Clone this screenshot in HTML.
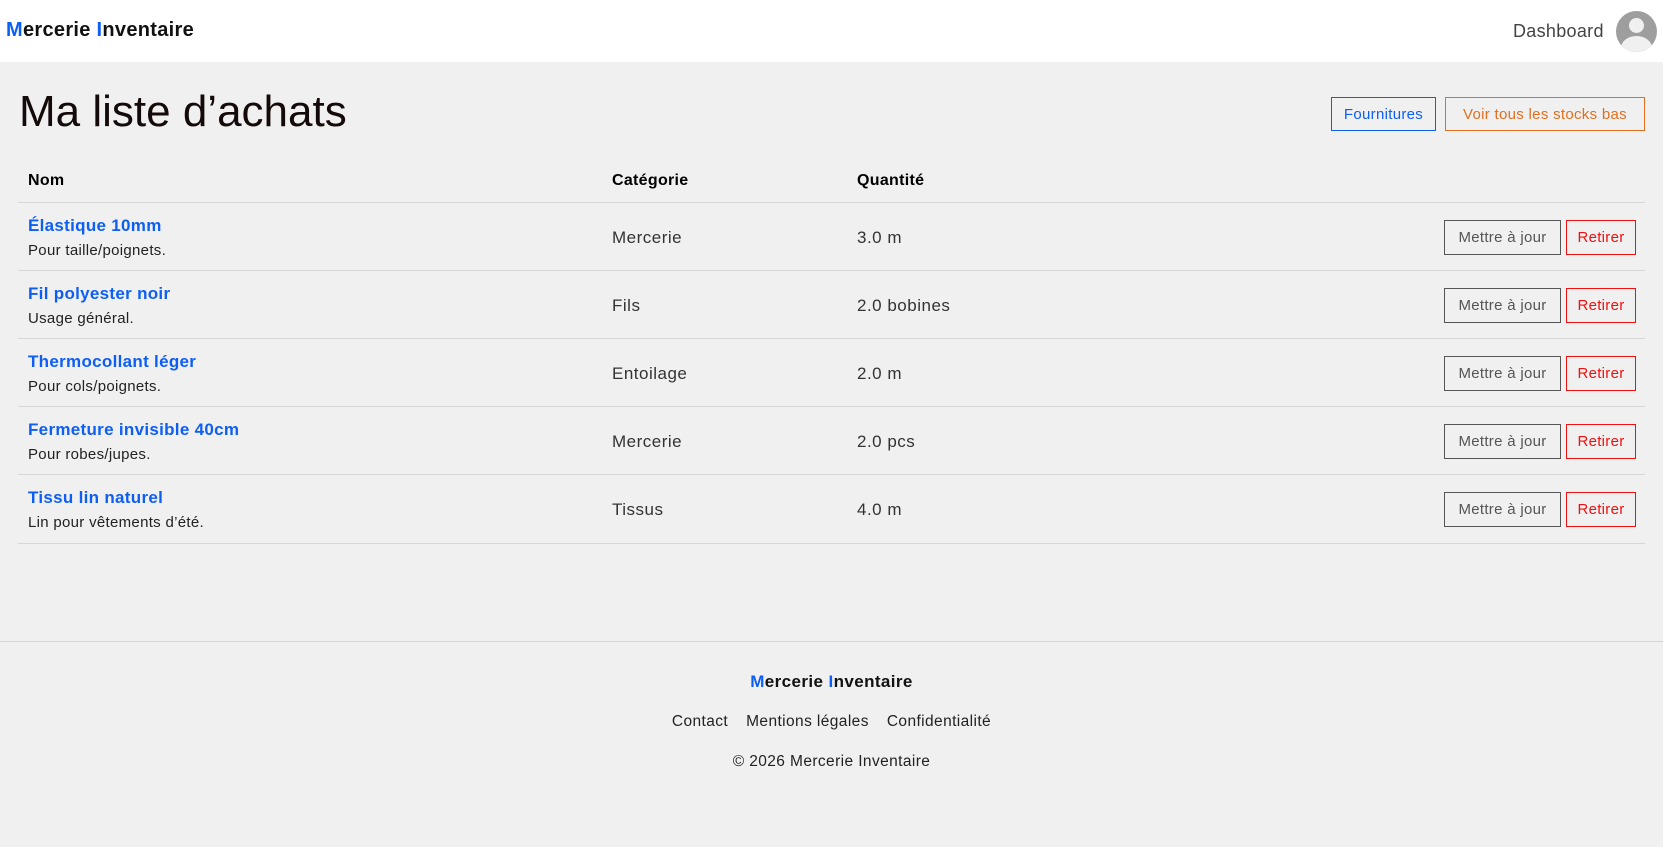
<!DOCTYPE html>
<html><head><meta charset="utf-8"><style>
*{box-sizing:border-box;margin:0;padding:0}
body{width:1663px;height:847px;background:#f0f0f0;font-family:"Liberation Sans",sans-serif;color:#333;position:relative;overflow:hidden}
.hdr{position:absolute;left:0;top:0;width:1663px;height:62px;background:#fff}
.logo{position:absolute;left:6px;top:19px;font-weight:bold;font-size:20px;color:#111;letter-spacing:0.3px}
.logo b{color:#0d5ef5}
.dash{position:absolute;left:1513px;top:21px;font-size:18px;color:#444;letter-spacing:0.3px}
.av{position:absolute;left:1616px;top:11px;width:41px;height:41px;border-radius:50%;background:#9e9e9e;overflow:hidden}
h1{position:absolute;left:19px;top:87px;font-weight:normal;font-size:44px;color:#150a0a}
.btn{position:absolute;border:1px solid;font-size:15px;display:flex;align-items:center;justify-content:center;background:transparent;letter-spacing:0.3px}
.row{position:absolute;left:18px;width:1627px;border-bottom:1px solid #d6d6d6}
.th{position:absolute;font-weight:bold;font-size:16px;color:#000;top:172px;letter-spacing:0.3px}
.nm{position:absolute;left:10px;font-weight:bold;color:#0d5ef5;font-size:17px;letter-spacing:0.3px}
.ds{position:absolute;left:10px;font-size:15px;color:#222;letter-spacing:0.3px}
.c{position:absolute;font-size:17px;color:#333;letter-spacing:0.5px}
.foot{position:absolute;left:0;top:641px;width:1663px;border-top:1px solid #d6d6d6;text-align:center;letter-spacing:0.4px}
</style></head><body>
<div class="hdr">
<div class="logo"><b>M</b>ercerie <b>I</b>nventaire</div>
<div class="dash">Dashboard</div>
<div class="av"><div style="position:absolute;left:13px;top:7px;width:15px;height:15px;border-radius:50%;background:#f0f0f0"></div><div style="position:absolute;left:5px;top:25px;width:31px;height:24px;border-radius:50%;background:#f0f0f0"></div></div>
</div>
<h1>Ma liste d’achats</h1>
<div class="btn" style="left:1331px;top:97px;width:105px;height:34px;color:#0d5ef5;border-color:#0d5ef5">Fournitures</div>
<div class="btn" style="left:1445px;top:97px;width:200px;height:34px;color:#e07020;border-color:#e07020">Voir tous les stocks bas</div>
<div class="th" style="left:28px">Nom</div>
<div class="th" style="left:612px">Catégorie</div>
<div class="th" style="left:857px">Quantité</div>
<div class="row" style="top:202px;height:0"></div>

<div class="row" style="top:203px;height:68px">
<div class="nm" style="top:13px">Élastique 10mm</div><div class="ds" style="top:39px">Pour taille/poignets.</div>
<div class="c" style="left:594px;top:25px">Mercerie</div><div class="c" style="left:839px;top:25px">3.0 m</div>
<div class="btn" style="left:1426px;top:17px;width:117px;height:35px;color:#555;border-color:#555">Mettre à jour</div>
<div class="btn" style="left:1548px;top:17px;width:70px;height:35px;color:#f01010;border-color:#f01010">Retirer</div></div>
<div class="row" style="top:271px;height:68px">
<div class="nm" style="top:13px">Fil polyester noir</div><div class="ds" style="top:39px">Usage général.</div>
<div class="c" style="left:594px;top:25px">Fils</div><div class="c" style="left:839px;top:25px">2.0 bobines</div>
<div class="btn" style="left:1426px;top:17px;width:117px;height:35px;color:#555;border-color:#555">Mettre à jour</div>
<div class="btn" style="left:1548px;top:17px;width:70px;height:35px;color:#f01010;border-color:#f01010">Retirer</div></div>
<div class="row" style="top:339px;height:68px">
<div class="nm" style="top:13px">Thermocollant léger</div><div class="ds" style="top:39px">Pour cols/poignets.</div>
<div class="c" style="left:594px;top:25px">Entoilage</div><div class="c" style="left:839px;top:25px">2.0 m</div>
<div class="btn" style="left:1426px;top:17px;width:117px;height:35px;color:#555;border-color:#555">Mettre à jour</div>
<div class="btn" style="left:1548px;top:17px;width:70px;height:35px;color:#f01010;border-color:#f01010">Retirer</div></div>
<div class="row" style="top:407px;height:68px">
<div class="nm" style="top:13px">Fermeture invisible 40cm</div><div class="ds" style="top:39px">Pour robes/jupes.</div>
<div class="c" style="left:594px;top:25px">Mercerie</div><div class="c" style="left:839px;top:25px">2.0 pcs</div>
<div class="btn" style="left:1426px;top:17px;width:117px;height:35px;color:#555;border-color:#555">Mettre à jour</div>
<div class="btn" style="left:1548px;top:17px;width:70px;height:35px;color:#f01010;border-color:#f01010">Retirer</div></div>
<div class="row" style="top:475px;height:69px">
<div class="nm" style="top:13px">Tissu lin naturel</div><div class="ds" style="top:39px">Lin pour vêtements d’été.</div>
<div class="c" style="left:594px;top:25px">Tissus</div><div class="c" style="left:839px;top:25px">4.0 m</div>
<div class="btn" style="left:1426px;top:17px;width:117px;height:35px;color:#555;border-color:#555">Mettre à jour</div>
<div class="btn" style="left:1548px;top:17px;width:70px;height:35px;color:#f01010;border-color:#f01010">Retirer</div></div>

<div class="foot">
<div style="margin-top:30px;font-weight:bold;font-size:17px;color:#111"><span style="color:#0d5ef5">M</span>ercerie <span style="color:#0d5ef5">I</span>nventaire</div>
<div style="margin-top:21px;font-size:15.5px;color:#222"><span>Contact</span><span style="margin-left:18px">Mentions légales</span><span style="margin-left:18px">Confidentialité</span></div>
<div style="margin-top:22px;font-size:15.5px;color:#222">© 2026 Mercerie Inventaire</div>
</div>
</body></html>
